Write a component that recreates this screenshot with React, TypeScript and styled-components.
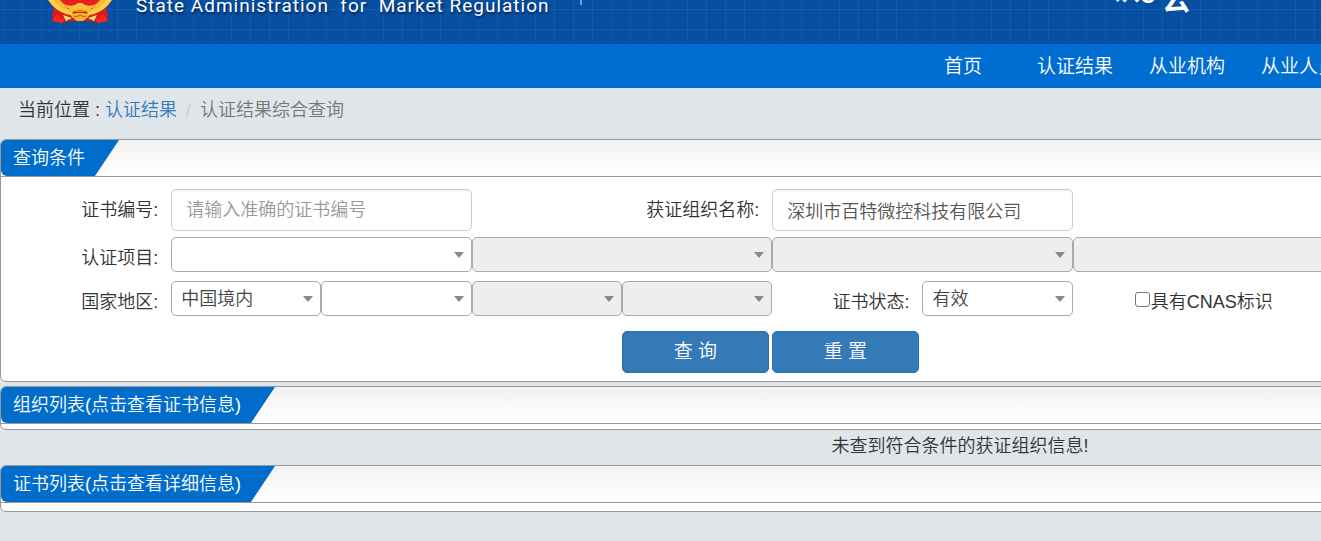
import React from 'react';
import styled, { createGlobalStyle } from 'styled-components';

const GlobalStyle = createGlobalStyle`
  *, *::before, *::after { box-sizing: border-box; }
  body {
    margin: 0;
    overflow-x: hidden;
    background: #e0e5e9;
    color: #333;
    font-family: "Liberation Sans", "Noto Sans CJK SC", sans-serif;
    font-size: 18px;
    font-weight: 350;
    line-height: 26px;
  }
  input, select, button { font: inherit; color: inherit; }
`;

const Page = styled.div`
  min-width: 1920px;
`;

const Banner = styled.header`
  display: flex;
  align-items: flex-end;
  height: 44px;
  padding-left: 48px;
  overflow: hidden;
  color: #fff;
  background-color: #074fa0;
  background-image:
    linear-gradient(to right, rgba(40, 130, 210, 0.2) 1px, transparent 1px),
    linear-gradient(to bottom, rgba(40, 130, 210, 0.3) 1px, transparent 1px);
  background-size: 19px 100%, 100% 20px;
  background-position: 3px 0, 0 9px;
`;

const Emblem = styled.svg`
  flex: none;
  margin-bottom: 20px;
`;

const AgencyName = styled.span`
  flex: none;
  margin: 0 0 26px 24px;
  width: 444px;
  font-family: Roboto, sans-serif;
  font-size: 19px;
  font-weight: 400;
  line-height: 24px;
  letter-spacing: 1px;
  white-space: pre;
  text-shadow: 1px 2px 2px rgba(0, 20, 60, 0.7);
`;

const Divider = styled.span`
  flex: none;
  width: 2px;
  height: 40px;
  margin-bottom: 39px;
  background: #6f9fd0;
`;

const Brand = styled.span`
  display: flex;
  align-items: flex-end;
  margin-left: 530px;
  font-weight: 700;
  font-size: 28px;
  line-height: 28px;
`;

const BrandPart = styled.span<{ $lift: number }>`
  margin-bottom: ${p => p.$lift}px;
`;

const BrandTail = styled(BrandPart)`
  margin-left: 7px;
`;

const Nav = styled.nav`
  display: flex;
  height: 44px;
  padding-left: 907px;
  background: #006dd0;
`;

const NavLink = styled.a`
  width: 112px;
  color: #fff;
  font-size: 19px;
  line-height: 46px;
  text-align: center;
  text-decoration: none;
  white-space: nowrap;
`;

const Breadcrumb = styled.nav`
  display: flex;
  height: 51px;
  padding: 9px 18px;
  white-space: pre;
`;

const Crumb = styled.a`
  color: #337ab7;
  text-decoration: none;
`;

const CrumbDivider = styled.span`
  padding: 0 9px;
  color: #ccc;
`;

const CurrentCrumb = styled.span`
  color: #777;
`;

const Panel = styled.section`
  border: 1px solid #999;
  border-radius: 6px;
  background: #fff;
  overflow: hidden;
`;

const PanelHeader = styled.div`
  height: 37px;
  border-bottom: 1px solid #999;
  background: linear-gradient(#f2f2f2, #fff);
`;

const PanelTitle = styled.h2`
  display: inline-block;
  height: 36px;
  margin: 0;
  padding: 0 34px 0 12px;
  border-bottom-left-radius: 6px;
  background: #006dcb;
  clip-path: polygon(0 0, 100% 0, calc(100% - 24px) 100%, 0 100%);
  color: #fff;
  font-size: 18px;
  font-weight: 350;
  line-height: 36px;
  vertical-align: top;
`;

const PanelFoot = styled.div<{ $height: number }>`
  height: ${p => p.$height}px;
`;

const Form = styled.form`
  width: 94%;
  margin-left: 20px;
  padding: 12px 0 8px;
`;

const Row = styled.div<{ $gap: number }>`
  display: grid;
  grid-template-columns: repeat(12, 1fr);
  margin-bottom: ${p => p.$gap}px;
`;

const Label = styled.label<{ $span?: number }>`
  grid-column: span ${p => p.$span ?? 1};
  padding: 8px 13px 0 0;
  text-align: right;
  white-space: nowrap;
`;

const TextInput = styled.input`
  grid-column: span 2;
  min-width: 0;
  height: 42px;
  padding: 0 14px;
  border: 1px solid #ccc;
  border-radius: 5px;
  box-shadow: inset 0 1px 1px rgba(0, 0, 0, 0.075);
  background: #fff;
  color: #555;
  &::placeholder { color: #999; opacity: 1; }
`;

const SelectBox = styled.span<{ $span: number }>`
  position: relative;
  grid-column: span ${p => p.$span};
  height: 35px;
  &::after {
    content: "";
    position: absolute;
    top: 15px;
    right: 8px;
    border: solid transparent;
    border-width: 6px 5px 0;
    border-top-color: #888;
    pointer-events: none;
  }
`;

const Select = styled.select`
  display: block;
  width: 100%;
  height: 35px;
  padding: 0 24px 0 9px;
  border: 1px solid #aaa;
  border-radius: 5px;
  appearance: none;
  background: #fff;
  color: #444;
  line-height: 26px;
  &:disabled { background: #eee; opacity: 1; }
`;

const CheckLabel = styled.label`
  grid-column: span 2;
  display: flex;
  align-items: flex-start;
  padding: 8px 0 0 62px;
  white-space: nowrap;
`;

const Checkbox = styled.input`
  width: 15px;
  height: 15px;
  margin: 3px 1px 0 0;
  border: 1px solid #767676;
  border-radius: 3px;
  appearance: none;
  background: #fff;
  &:checked { background: #006dd0; }
`;

const Actions = styled.div`
  display: flex;
  gap: 3px;
  padding-left: calc(100% / 3);
`;

const Button = styled.button`
  width: 147px;
  height: 42px;
  padding: 0;
  border: 1px solid #2e6da4;
  border-radius: 5px;
  background: #337ab7;
  color: #fff;
  font-size: 19px;
`;

const Message = styled.p`
  margin: 0;
  padding: 3px 0 6px;
  text-align: center;
`;

const Spacer = styled.div`
  height: 4px;
`;

type DropdownProps = { id?: string; name: string; span: number; value?: string; disabled?: boolean };

function Dropdown({ id, name, span, value = '', disabled }: DropdownProps) {
  return (
    <SelectBox $span={span}>
      <Select id={id} aria-label={id ? undefined : name} name={name} disabled={disabled}>
        <option>{value}</option>
      </Select>
    </SelectBox>
  );
}

function NationalEmblem() {
  return (
    <Emblem width="64" height="64" viewBox="0 -40 64 64" aria-hidden="true">
      <circle cx="32" cy="-16" r="32" fill="#f3bd2c" />
      <circle cx="32" cy="-19" r="27" fill="#e51c20" />
      <path d="M6 3 L4 21 L15 23 L21 21 H43 L49 23 L60 21 L58 3 L46 12 H18Z" fill="#d91a1b" />
      <path d="M4 21 L9 14 L16 20 L15 23Z M60 21 L55 14 L48 20 L49 23Z" fill="#ee2622" />
      <path d="M12 0 H52 L44 9 H20Z" fill="#ea1f22" />
      <path d="M0 0 H6 Q13 10 24 12 L27 16 Q9 14 0 0Z M64 0 H58 Q51 10 40 12 L37 16 Q55 14 64 0Z" fill="#ffcf45" />
      <path d="M14 3 Q20 7 27 5 L30 3 H34 L37 5 Q44 7 50 3 Q45 10 38 9 L34 11 H30 L26 9 Q19 10 14 3Z" fill="#f8c235" />
      <path d="M22 15 L28 13 H36 L42 15 L39 18 L35 21 H29 L25 18Z" fill="#f4b428" />
      <path d="M15 15 L24 18 L18 21Z M49 15 L40 18 L46 21Z" fill="#ffe36a" />
      <path d="M25 12 Q32 9 39 12 M26 17 Q32 14 38 17" fill="none" stroke="#cf5a18" strokeWidth="1" />
    </Emblem>
  );
}

export default function App() {
  return (
    <>
      <GlobalStyle />
      <Page>
        <Banner>
          <NationalEmblem />
          <AgencyName>{'State Administration  for  Market Regulation'}</AgencyName>
          <Divider />
          <Brand>
            <BrandPart $lift={39}>认</BrandPart>
            <BrandPart $lift={36}>e</BrandPart>
            <BrandTail $lift={29}>云</BrandTail>
          </Brand>
        </Banner>
        <Nav>
          <NavLink href="#home">首页</NavLink>
          <NavLink href="#results">认证结果</NavLink>
          <NavLink href="#agencies">从业机构</NavLink>
          <NavLink href="#people">从业人员</NavLink>
        </Nav>
        <Breadcrumb>
          <span>{'当前位置 : '}</span>
          <Crumb href="#results">认证结果</Crumb>
          <CrumbDivider>/</CrumbDivider>
          <CurrentCrumb>认证结果综合查询</CurrentCrumb>
        </Breadcrumb>
        <main>
          <Panel>
            <PanelHeader>
              <PanelTitle>查询条件</PanelTitle>
            </PanelHeader>
            <Form onSubmit={e => e.preventDefault()}>
              <Row $gap={6}>
                <Label htmlFor="cert-no">证书编号:</Label>
                <TextInput id="cert-no" placeholder="请输入准确的证书编号" />
                <Label htmlFor="org-name" $span={2}>获证组织名称:</Label>
                <TextInput id="org-name" defaultValue="深圳市百特微控科技有限公司" />
              </Row>
              <Row $gap={9}>
                <Label htmlFor="project">认证项目:</Label>
                <Dropdown id="project" name="project" span={2} />
                <Dropdown name="project-2" span={2} disabled />
                <Dropdown name="project-3" span={2} disabled />
                <Dropdown name="project-4" span={2} disabled />
              </Row>
              <Row $gap={15}>
                <Label htmlFor="region">国家地区:</Label>
                <Dropdown id="region" name="region" span={1} value="中国境内" />
                <Dropdown name="province" span={1} />
                <Dropdown name="city" span={1} disabled />
                <Dropdown name="district" span={1} disabled />
                <Label htmlFor="status">证书状态:</Label>
                <Dropdown id="status" name="status" span={1} value="有效" />
                <CheckLabel>
                  <Checkbox type="checkbox" />
                  具有CNAS标识
                </CheckLabel>
              </Row>
              <Actions>
                <Button type="submit">查 询</Button>
                <Button type="reset">重 置</Button>
              </Actions>
            </Form>
          </Panel>
          <Spacer />
          <Panel>
            <PanelHeader>
              <PanelTitle>组织列表(点击查看证书信息)</PanelTitle>
            </PanelHeader>
            <PanelFoot $height={5} />
          </Panel>
          <Message>未查到符合条件的获证组织信息!</Message>
          <Panel>
            <PanelHeader>
              <PanelTitle>证书列表(点击查看详细信息)</PanelTitle>
            </PanelHeader>
            <PanelFoot $height={8} />
          </Panel>
        </main>
      </Page>
    </>
  );
}
